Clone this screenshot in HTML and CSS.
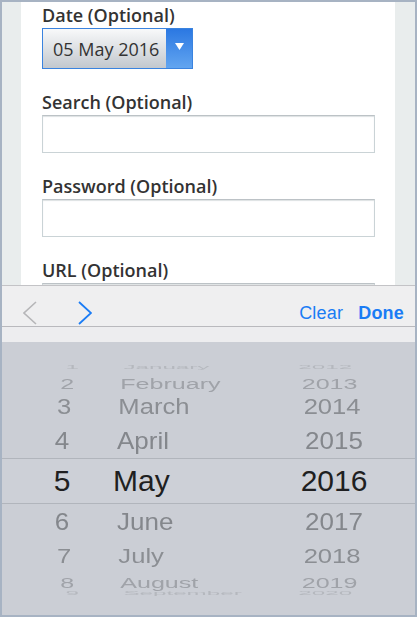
FILE: index.html
```html
<!DOCTYPE html>
<html>
<head>
<meta charset="utf-8">
<link rel="stylesheet" href="styles.css">
</head>
<body>
<div class="frame">
  <div class="page">
    <div class="content">
      <div class="field">
        <div class="label">Date (Optional)</div>
        <div class="select">
          <span class="select-value">05 May 2016</span>
          <span class="select-arrow"><svg width="9" height="7" viewBox="0 0 9 7"><polygon points="0,0 9,0 4.5,7" fill="#fff"/></svg></span>
        </div>
      </div>
      <div class="field">
        <div class="label">Search (Optional)</div>
        <div class="input"></div>
      </div>
      <div class="field">
        <div class="label">Password (Optional)</div>
        <div class="input"></div>
      </div>
      <div class="field">
        <div class="label">URL (Optional)</div>
        <div class="input"></div>
      </div>
    </div>
  </div>
  <div class="toolbar">
    <svg class="chev chev-prev" width="14" height="24" viewBox="0 0 14 24"><polyline points="13,1 1,12 13,23" fill="none" stroke="#b6b6b8" stroke-width="1.6"/></svg>
    <svg class="chev chev-next" width="14" height="24" viewBox="0 0 14 24"><polyline points="1,1 13,12 1,23" fill="none" stroke="#1a7cf5" stroke-width="1.8"/></svg>
    <span class="spacer"></span>
    <span class="tb-btn">Clear</span>
    <span class="tb-btn tb-done">Done</span>
  </div>
  <div class="strip"></div>
  <div class="picker">
    <div class="pad-top"></div>
    <div class="row r-far r-jan"><span class="day">1</span><span class="month">January</span><span class="year">2012</span></div>
    <div class="row r-mid r-feb"><span class="day">2</span><span class="month">February</span><span class="year">2013</span></div>
    <div class="row r-near2 r-mar"><span class="day">3</span><span class="month">March</span><span class="year">2014</span></div>
    <div class="row r-near1 r-apr"><span class="day">4</span><span class="month">April</span><span class="year">2015</span></div>
    <div class="row r-sel"><span class="day">5</span><span class="month">May</span><span class="year">2016</span></div>
    <div class="row r-near1 r-jun"><span class="day">6</span><span class="month">June</span><span class="year">2017</span></div>
    <div class="row r-near2b r-jul"><span class="day">7</span><span class="month">July</span><span class="year">2018</span></div>
    <div class="row r-mid r-aug"><span class="day">8</span><span class="month">August</span><span class="year">2019</span></div>
    <div class="row r-far r-sep"><span class="day">9</span><span class="month">September</span><span class="year">2020</span></div>
  </div>
</div>
</body>
</html>
```
FILE: styles.css
```css
html, body {
  margin: 0;
  padding: 0;
  background: #ffffff;
}

.frame {
  width: 417px;
  height: 617px;
  box-sizing: border-box;
  border: 2px solid #a7b3c3;
  display: flex;
  flex-direction: column;
  overflow: hidden;
}

.page {
  height: 283px;
  flex: none;
  background: #e9eded;
  padding: 0 20px 0 19px;
  overflow: hidden;
}

.content {
  background: #ffffff;
  height: 100%;
  padding: 3px 20px 0 21px;
  box-sizing: border-box;
  display: flex;
  flex-direction: column;
  gap: 23px;
}

.field {
  display: flex;
  flex-direction: column;
  gap: 3px;
}

.label {
  font-family: "Open Sans", "Noto Sans", sans-serif;
  font-weight: 600;
  font-size: 18px;
  line-height: 20px;
  height: 20px;
  color: #333333;
}

.select {
  width: 151px;
  height: 41px;
  box-sizing: border-box;
  border: 1px solid #3a83df;
  display: flex;
}

.select-value {
  flex: 1;
  display: flex;
  align-items: center;
  padding-left: 10px;
  background: linear-gradient(#f8f9fa, #c3c8ce);
  font-family: "Open Sans", "Noto Sans", sans-serif;
  font-size: 18px;
  color: #333333;
}

.select-arrow {
  width: 26px;
  display: flex;
  justify-content: center;
  align-items: flex-start;
  padding-top: 14px;
  box-sizing: border-box;
  background: linear-gradient(#2b78e2, #62a5f0);
}

.input {
  height: 38px;
  box-sizing: border-box;
  border: 1px solid #cad3d6;
  border-top-color: #bcc2c6;
  background: #ffffff;
  box-shadow: inset 0 1px 1px #dde1e3;
}

.toolbar {
  flex: none;
  border-top: 1px solid #c3c3c6;
  border-bottom: 1px solid #b9b9bd;
  background: #efeff0;
  display: flex;
  align-items: center;
  padding: 13px 11px 0 21px;
  box-sizing: content-box;
  height: 27px;
}

.chev {
  display: block;
  flex: none;
}

.chev-next {
  margin-left: 41px;
}

.spacer {
  flex: 1;
}

.tb-btn {
  font-family: "Liberation Sans", Arial, sans-serif;
  font-size: 18px;
  color: #1a7cf5;
  margin-top: 2px;
  letter-spacing: 0.2px;
}

.tb-done {
  font-weight: bold;
  margin-left: 15px;
}

.strip {
  flex: none;
  height: 15px;
  background: #ededef;
}

.picker {
  flex: 1;
  background: #cbced5;
  display: flex;
  flex-direction: column;
  overflow: hidden;
  font-family: "Liberation Sans", Arial, sans-serif;
}

.pad-top {
  height: 17px;
  flex: none;
}

.row {
  flex: none;
  display: grid;
  grid-template-columns: 50px 1fr 100px;
  column-gap: 30px;
  padding: 0 31px 0 35px;
  align-items: center;
  font-size: 26px;
  line-height: 1;
  white-space: nowrap;
}

.day, .year {
  text-align: center;
}

.month {
  text-align: left;
}

.r-jan { height: 15px; }
.r-feb { height: 14px; }
.r-mar { height: 36px; }
.r-apr { height: 34px; }
.r-jun { height: 35px; }
.r-jul { height: 34px; }
.r-aug { height: 14px; }
.r-sep { height: 10px; }

.r-far {
  color: #b5b8be;
  transform: scale(0.93, 0.18);
  filter: blur(0.5px);
}

.r-mid {
  color: #a0a3a9;
  transform: scale(0.965, 0.54);
  filter: blur(0.3px);
}

.r-near2 {
  color: #8b8e93;
  transform: scale(0.985, 0.84);
}

.r-near2b {
  color: #8b8e93;
  transform: scale(0.985, 0.76);
}

.r-near1 {
  color: #84878c;
  transform: scale(1, 0.91);
}

.r-sel {
  height: 44px;
  border-top: 1px solid #b1b5bc;
  border-bottom: 1px solid #b1b5bc;
  background: #cdd0d7;
  color: #1f1f21;
  font-size: 30px;
}

.r-sel .month {
  margin-left: -4px;
}
```
